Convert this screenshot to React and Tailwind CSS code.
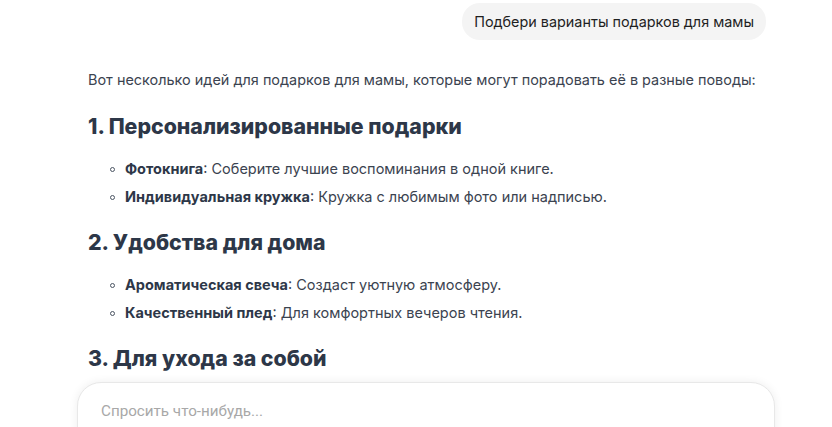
export default function App() {
  const sections = [
    {
      title: '1. Персонализированные подарки',
      items: [
        ['Фотокнига', 'Соберите лучшие воспоминания в одной книге.'],
        ['Индивидуальная кружка', 'Кружка с любимым фото или надписью.'],
      ],
    },
    {
      title: '2. Удобства для дома',
      items: [
        ['Ароматическая свеча', 'Создаст уютную атмосферу.'],
        ['Качественный плед', 'Для комфортных вечеров чтения.'],
      ],
    },
    { title: '3. Для ухода за собой', items: [] },
  ];

  return (
    <div className="relative h-[427px] w-[832px] overflow-hidden bg-white font-['Inter',sans-serif]">
      {/* User message */}
      <div className="flex justify-end pr-[66px] pt-[3px]">
        <div className="flex h-[37px] items-center rounded-[18px] bg-[#f4f4f4] px-3 text-[14.4px] text-[#1f1f1f]">
          Подбери варианты подарков для мамы
        </div>
      </div>

      {/* Assistant answer */}
      <div className="pl-[88px] pr-[60px] pt-[28px] text-[#3b4350]">
        <p className="text-[14.45px] leading-6">
          Вот несколько идей для подарков для мамы, которые могут порадовать её в разные поводы:
        </p>
        {sections.map((s, i) => (
          <div key={s.title}>
            <h3 className={`${i === 0 ? 'mt-[20px]' : 'mt-[17px]'} mb-[15px] text-[21.3px] font-extrabold leading-7 text-[#2d3748]`}>
              {s.title}
            </h3>
            <ul className="pl-[22px] text-[14.5px] leading-7">
              {s.items.map(([b, t]) => (
                <li key={b} className="flex items-center">
                  <span className="mr-[10px] h-[5px] w-[5px] rounded-full border border-[#4b5563]" />
                  <span>
                    <strong className="font-bold text-[#2d3748]">{b}</strong>: {t}
                  </span>
                </li>
              ))}
            </ul>
          </div>
        ))}
      </div>

      {/* Input */}
      <div className="absolute left-[77px] top-[382px] h-[80px] w-[698px] rounded-[24px] border border-[#e8e8e8] bg-white shadow-[0_0_10px_rgba(0,0,0,0.07)]">
        <div className="pl-[23px] pt-[18px] font-['Roboto',sans-serif] text-[15.2px] leading-5 text-[#a8a8a8]">Спросить что-нибудь...</div>
      </div>
    </div>
  );
}
